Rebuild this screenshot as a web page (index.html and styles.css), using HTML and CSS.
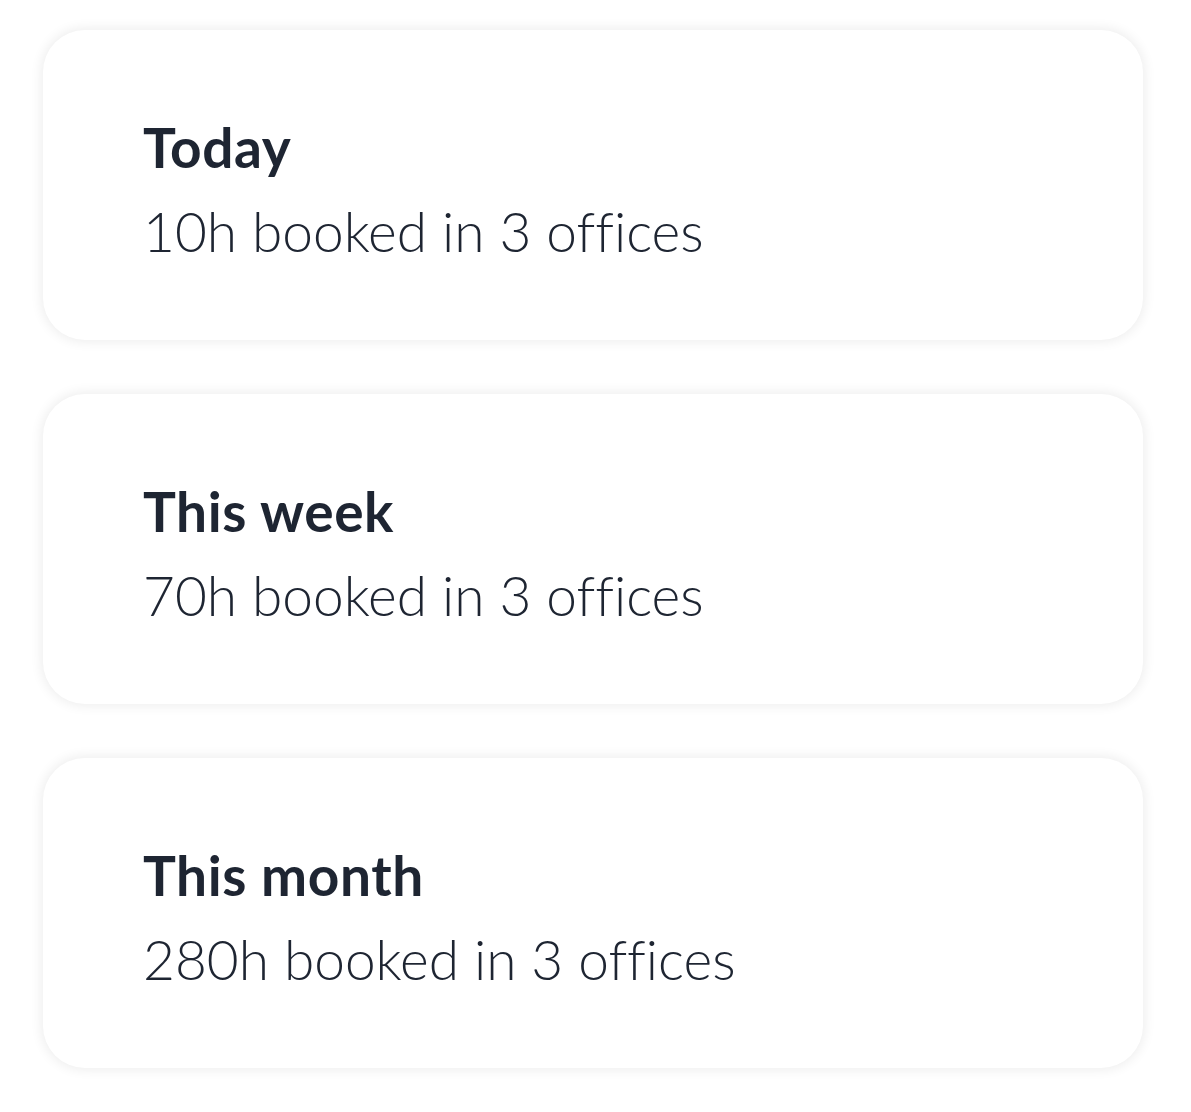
FILE: index.html
```html
<!DOCTYPE html>
<html>
<head>
<meta charset="utf-8">
<link rel="stylesheet" href="styles.css">
</head>
<body>
<main class="list">
  <section class="card">
    <h2 class="title">Today</h2>
    <p class="desc">10h booked in 3 offices</p>
  </section>
  <section class="card">
    <h2 class="title">This week</h2>
    <p class="desc">70h booked in 3 offices</p>
  </section>
  <section class="card">
    <h2 class="title">This month</h2>
    <p class="desc">280h booked in 3 offices</p>
  </section>
</main>
</body>
</html>
```
FILE: styles.css
```css
html, body {
  margin: 0;
  padding: 0;
  background: #ffffff;
}
body {
  font-family: "Lato", "Noto Sans", sans-serif;
  color: #1e2532;
  font-variant-ligatures: none;
}
.list {
  display: flex;
  flex-direction: column;
  gap: 54px;
  padding: 30px 48px 45px 43px;
}
.card {
  width: 1100px;
  height: 310px;
  box-sizing: border-box;
  border-radius: 42px;
  background: #fff;
  box-shadow: 0 0 12px 2px rgba(0, 0, 0, 0.07);
  display: flex;
  flex-direction: column;
  justify-content: center;
  padding-left: 100px;
  padding-top: 8px;
}
.title {
  margin: 0;
  font-size: 55px;
  font-weight: 700;
  letter-spacing: 0.6px;
  line-height: 70px;
}
.desc {
  margin: 14px 0 0;
  font-size: 55px;
  font-weight: 300;
  letter-spacing: 0;
  line-height: 70px;
}
```
